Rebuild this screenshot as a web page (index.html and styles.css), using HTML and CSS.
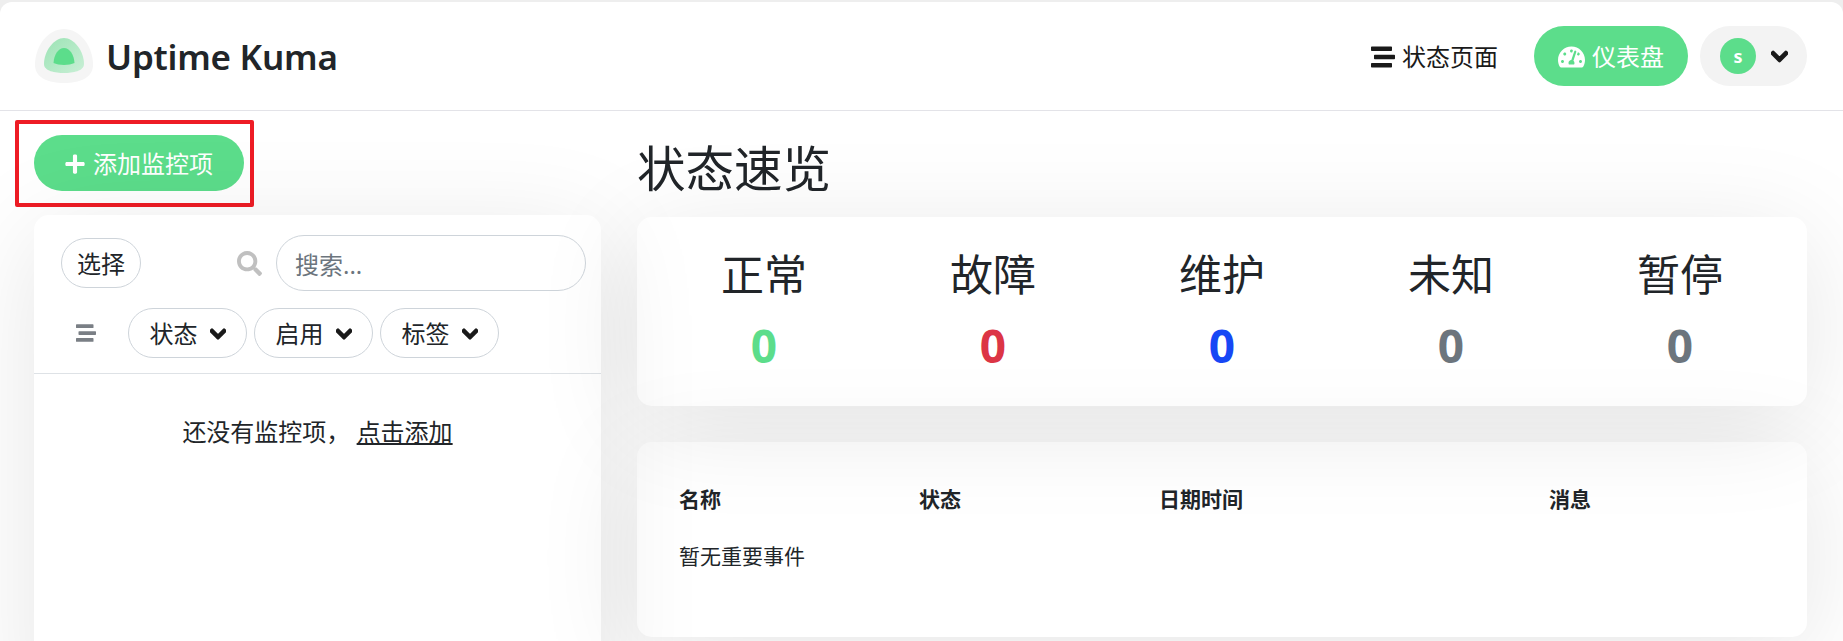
FILE: index.html
```html
<!DOCTYPE html>
<html lang="zh-CN">
<head>
    <meta charset="UTF-8">
    <meta name="viewport" content="width=device-width, initial-scale=1.0">
    <title>Uptime Kuma</title>
    <link rel="stylesheet" href="styles.css">
</head>
<body>
    <svg class="sprite" aria-hidden="true">
        <symbol id="i-plus" viewBox="0 0 448 512"><path d="M416 208H272V64c0-17.67-14.33-32-32-32h-32c-17.67 0-32 14.33-32 32v144H32c-17.67 0-32 14.33-32 32v32c0 17.67 14.33 32 32 32h144v144c0 17.67 14.33 32 32 32h32c17.67 0 32-14.33 32-32V304h144c17.67 0 32-14.33 32-32v-32c0-17.67-14.33-32-32-32z"/></symbol>
        <symbol id="i-chevron" viewBox="0 0 448 512"><path d="M207.029 381.476L12.686 187.132c-9.373-9.373-9.373-24.569 0-33.941l22.667-22.667c9.357-9.357 24.522-9.375 33.901-.04L224 284.505l154.745-154.021c9.379-9.335 24.544-9.317 33.901.04l22.667 22.667c9.373 9.373 9.373 24.569 0 33.941L240.971 381.476c-9.373 9.372-24.569 9.372-33.942 0z"/></symbol>
        <symbol id="i-search" viewBox="0 0 512 512"><path d="M505 442.7L405.3 343c-4.5-4.5-10.6-7-17-7H372c27.6-35.3 44-79.7 44-128C416 93.1 322.9 0 208 0S0 93.1 0 208s93.1 208 208 208c48.3 0 92.7-16.4 128-44v16.3c0 6.4 2.5 12.5 7 17l99.7 99.7c9.4 9.4 24.6 9.4 33.9 0l28.3-28.3c9.4-9.4 9.4-24.6.1-34zM208 336c-70.7 0-128-57.2-128-128 0-70.7 57.2-128 128-128 70.7 0 128 57.2 128 128 0 70.7-57.2 128-128 128z"/></symbol>
        <symbol id="i-gauge" viewBox="0 0 576 512"><path d="M288 32C128.94 32 0 160.94 0 320c0 52.8 14.25 102.26 39.06 144.8 5.61 9.62 16.3 15.2 27.44 15.2h443c11.14 0 21.83-5.58 27.44-15.2C561.75 422.26 576 372.8 576 320c0-159.06-128.94-288-288-288zm0 64c14.71 0 26.58 10.13 30.32 23.65-1.11 2.26-2.64 4.23-3.45 6.67l-9.22 27.67c-5.13 3.49-10.97 6.01-17.64 6.01-17.67 0-32-14.33-32-32S270.33 96 288 96zM96 384c-17.67 0-32-14.33-32-32s14.33-32 32-32 32 14.33 32 32-14.33 32-32 32zm48-160c-17.67 0-32-14.33-32-32s14.33-32 32-32 32 14.33 32 32-14.33 32-32 32zm246.77-72.41l-61.33 184C343.13 347.33 352 364.54 352 384c0 11.72-3.38 22.55-8.88 32H232.88c-5.5-9.45-8.88-20.28-8.88-32 0-33.94 26.5-61.43 59.9-63.59l61.34-184.01c4.17-12.56 17.73-19.45 30.36-15.17 12.57 4.19 19.35 17.77 15.17 30.36zm14.66 57.2l15.52-46.55c3.47-1.29 7.13-2.23 11.05-2.23 17.67 0 32 14.33 32 32s-14.33 32-32 32c-11.38-.01-20.89-6.28-26.57-15.22zM480 384c-17.67 0-32-14.33-32-32s14.33-32 32-32 32 14.33 32 32-14.33 32-32 32z"/></symbol>
        <symbol id="i-stream" viewBox="0 0 512 512"><path d="M16 128h416c8.84 0 16-7.16 16-16V48c0-8.84-7.16-16-16-16H16C7.16 32 0 39.16 0 48v64c0 8.84 7.16 16 16 16zm480 80H80c-8.84 0-16 7.16-16 16v64c0 8.84 7.16 16 16 16h416c8.84 0 16-7.16 16-16v-64c0-8.84-7.16-16-16-16zm-64 176H16c-8.84 0-16 7.16-16 16v64c0 8.84 7.16 16 16 16h416c8.84 0 16-7.16 16-16v-64c0-8.84-7.16-16-16-16z"/></symbol>
    </svg>

    <header class="topbar">
        <a href="#" class="brand">
            <svg class="logo" viewBox="0 0 58 54">
                <defs>
                    <linearGradient id="logoMid" x1="0" y1="0" x2="1" y2="1">
                        <stop offset="0" stop-color="#9be3b4"/>
                        <stop offset="1" stop-color="#c9efd6"/>
                    </linearGradient>
                </defs>
                <path fill="#f5f5f5" d="M29 0C44 0 58 16 58 36C58 49 44 54 29 54C14 54 0 49 0 36C0 16 14 0 29 0Z"/>
                <path fill="url(#logoMid)" d="M29 9C39 9 49 22 49 35C49 42 38 44 29 44C20 44 9 42 9 35C9 22 19 9 29 9Z"/>
                <path fill="#5cdd8b" d="M29 19C35 19 39 26 39.5 34C34 36.5 24 36.5 18.5 34C19 26 23 19 29 19Z"/>
            </svg>
            <span class="brand-name">Uptime Kuma</span>
        </a>
        <nav class="topnav">
            <a href="#" class="nav-link"><svg class="icon icon-stream"><use href="#i-stream"/></svg>状态页面</a>
            <a href="#" class="nav-link nav-active"><svg class="icon icon-gauge"><use href="#i-gauge"/></svg>仪表盘</a>
            <div class="profile">
                <span class="avatar">s</span>
                <svg class="icon icon-chevron"><use href="#i-chevron"/></svg>
            </div>
        </nav>
    </header>

    <main class="content">
        <div class="left-col">
            <div class="add-row">
                <a href="#" class="btn-add"><svg class="icon icon-plus"><use href="#i-plus"/></svg>添加监控项</a>
            </div>
            <section class="card list-card">
                <div class="list-header">
                    <div class="list-top">
                        <button class="pill select-btn">选择</button>
                        <div class="search">
                            <svg class="icon icon-search"><use href="#i-search"/></svg>
                            <input class="search-input" type="text" placeholder="搜索...">
                        </div>
                    </div>
                    <div class="filters">
                        <svg class="icon icon-filter"><use href="#i-stream"/></svg>
                        <button class="pill filter-pill">状态<svg class="icon icon-caret"><use href="#i-chevron"/></svg></button>
                        <button class="pill filter-pill">启用<svg class="icon icon-caret"><use href="#i-chevron"/></svg></button>
                        <button class="pill filter-pill">标签<svg class="icon icon-caret"><use href="#i-chevron"/></svg></button>
                    </div>
                </div>
                <p class="empty">还没有监控项， <a href="#">点击添加</a></p>
            </section>
        </div>

        <div class="right-col">
            <h1 class="page-title">状态速览</h1>
            <section class="card stats-card">
                <div class="stat"><h3>正常</h3><span class="num num-up">0</span></div>
                <div class="stat"><h3>故障</h3><span class="num num-down">0</span></div>
                <div class="stat"><h3>维护</h3><span class="num num-maint">0</span></div>
                <div class="stat"><h3>未知</h3><span class="num num-muted">0</span></div>
                <div class="stat"><h3>暂停</h3><span class="num num-muted">0</span></div>
            </section>
            <section class="card events-card">
                <table class="events">
                    <thead>
                        <tr><th>名称</th><th>状态</th><th>日期时间</th><th>消息</th></tr>
                    </thead>
                    <tbody>
                        <tr><td colspan="4">暂无重要事件</td></tr>
                    </tbody>
                </table>
            </section>
        </div>
    </main>
</body>
</html>
```

FILE: styles.css
```css
* {
    box-sizing: border-box;
}

html, body {
    height: 100%;
}

body {
    margin: 0;
    padding-top: 2px;
    overflow: hidden;
    background-color: #eeeeee;
    color: #212529;
    font-family: "Noto Sans", "Noto Sans CJK SC", sans-serif;
    font-size: 24px;
    line-height: 1.5;
}

a {
    color: inherit;
    text-decoration: none;
}

.sprite {
    display: none;
}

.icon {
    fill: currentColor;
    flex-shrink: 0;
}

/* top bar */
.topbar {
    display: flex;
    justify-content: space-between;
    align-items: center;
    height: 109px;
    padding: 0 36px 0 35px;
    background: #fff;
    border-bottom: 1px solid #e3e3e8;
    border-radius: 12px 12px 0 0;
}

.brand {
    display: flex;
    align-items: center;
    gap: 13px;
}

.logo {
    width: 58px;
    height: 54px;
}

.brand-name {
    padding-top: 3px;
    font-size: 35px;
    font-weight: 600;
    letter-spacing: -0.25px;
}

.topnav {
    display: flex;
    align-items: center;
    gap: 12px;
}

.nav-link {
    display: flex;
    align-items: center;
    gap: 7px;
    height: 60px;
    padding: 2px 24px 0;
    border-radius: 30px;
    color: #1a1a1a;
}

.nav-active {
    background: #5cdd8b;
    color: #fff;
}

.icon-stream {
    width: 24px;
    height: 24px;
}

.icon-gauge {
    width: 27px;
    height: 24px;
}

.profile {
    display: flex;
    align-items: center;
    gap: 15px;
    width: 107px;
    height: 60px;
    padding-left: 20px;
    background: #f3f3f3;
    border-radius: 30px;
    color: #1a1a1a;
}

.avatar {
    display: flex;
    justify-content: center;
    align-items: center;
    width: 36px;
    height: 36px;
    border-radius: 50%;
    background: #5cdd8b;
    color: #fff;
    font-size: 18px;
    font-weight: 700;
}

.icon-chevron {
    width: 17px;
    height: 19px;
    stroke: currentColor;
    stroke-width: 50px;
}

/* page */
.content {
    display: grid;
    grid-template-columns: 567px 1fr;
    gap: 36px;
    padding: 0 36px 0 34px;
    background: #fff;
    height: 530px;
}

.add-row {
    height: 104px;
    padding-top: 24px;
}

.btn-add {
    position: relative;
    display: inline-flex;
    align-items: center;
    gap: 8px;
    width: 210px;
    height: 56px;
    padding: 2px 0 0 31px;
    border-radius: 28px;
    background: #5cdd8b;
    color: #fff;
}

/* red annotation round the button */
.btn-add::before {
    content: "";
    position: absolute;
    top: -15px;
    left: -19px;
    right: -10px;
    bottom: -16px;
    border: 4px solid #ee1c25;
    border-radius: 2px;
}

.icon-plus {
    width: 20px;
    height: 22px;
}

.card {
    position: relative;
    background: #fff;
    border-radius: 15px;
}

/* the shadow sits on a layer of its own, it falls over the neighbouring cards too */
.card::after {
    content: "";
    position: absolute;
    top: 0;
    left: 0;
    right: 0;
    bottom: 0;
    z-index: 2;
    border-radius: 15px;
    box-shadow: 0 18px 105px rgba(0, 0, 0, 0.1);
    pointer-events: none;
}

.list-card {
    height: 500px;
}

.list-header {
    height: 159px;
    padding: 20px 15px 0 27px;
    border-bottom: 1px solid #dee2e6;
}

.list-top {
    display: flex;
    justify-content: space-between;
    align-items: center;
}

.pill {
    display: inline-flex;
    align-items: center;
    justify-content: center;
    padding-top: 2px;
    background: #fff;
    border: 1px solid #ced4da;
    border-radius: 26px;
    color: #212529;
    font-family: inherit;
    font-size: 24px;
    line-height: 1;
}

.select-btn {
    width: 80px;
    height: 50px;
}

.search {
    display: flex;
    align-items: center;
    gap: 14px;
    color: #c0c0c0;
}

.icon-search {
    width: 25px;
    height: 25px;
}

.search-input {
    width: 310px;
    height: 56px;
    padding: 2px 18px 0;
    border: 1px solid #ced4da;
    border-radius: 28px;
    font-family: inherit;
    font-size: 24px;
    color: #212529;
    background: #fff;
}

.search-input::placeholder {
    color: #6c757d;
}

.filters {
    display: flex;
    align-items: center;
    gap: 7px;
    margin-top: 17px;
}

.icon-filter {
    width: 20px;
    height: 20px;
    margin: 0 25px 0 15px;
    color: #7a7f85;
}

.filter-pill {
    gap: 12px;
    width: 119px;
    height: 50px;
}

.icon-caret {
    width: 16px;
    height: 18px;
    color: #1a1a1a;
    stroke: currentColor;
    stroke-width: 50px;
}

.empty {
    margin: 40px 0 0;
    text-align: center;
    font-size: 24px;
    line-height: 36px;
}

.empty a {
    text-decoration: underline;
}

.page-title {
    height: 106px;
    margin: 0;
    padding-top: 21px;
    font-size: 48.5px;
    font-weight: 400;
    line-height: 72px;
}

.stats-card {
    display: grid;
    grid-template-columns: repeat(5, 229px);
    justify-content: center;
    height: 189px;
    padding-top: 28px;
}

.stat {
    text-align: center;
}

.stat h3 {
    margin: 0;
    font-size: 43px;
    font-weight: 400;
    line-height: 60px;
}

.num {
    display: block;
    margin-top: 10px;
    font-size: 46px;
    font-weight: 700;
    line-height: 60px;
}

.num-up {
    color: #5cdd8b;
}

.num-down {
    color: #dc3545;
}

.num-maint {
    color: #1747f5;
}

.num-muted {
    color: #6c757d;
}

.events-card {
    height: 195px;
    margin-top: 36px;
    padding: 34px 42px 0;
}

.events {
    width: 100%;
    border-collapse: collapse;
    font-size: 21px;
    table-layout: fixed;
}

.events th {
    padding: 8px 0;
    text-align: left;
    font-weight: 700;
}

.events th:nth-child(1),
.events th:nth-child(2) {
    width: 240px;
}

.events th:nth-child(3) {
    width: 390px;
}

.events td {
    padding: 17px 0 16px;
}
```
